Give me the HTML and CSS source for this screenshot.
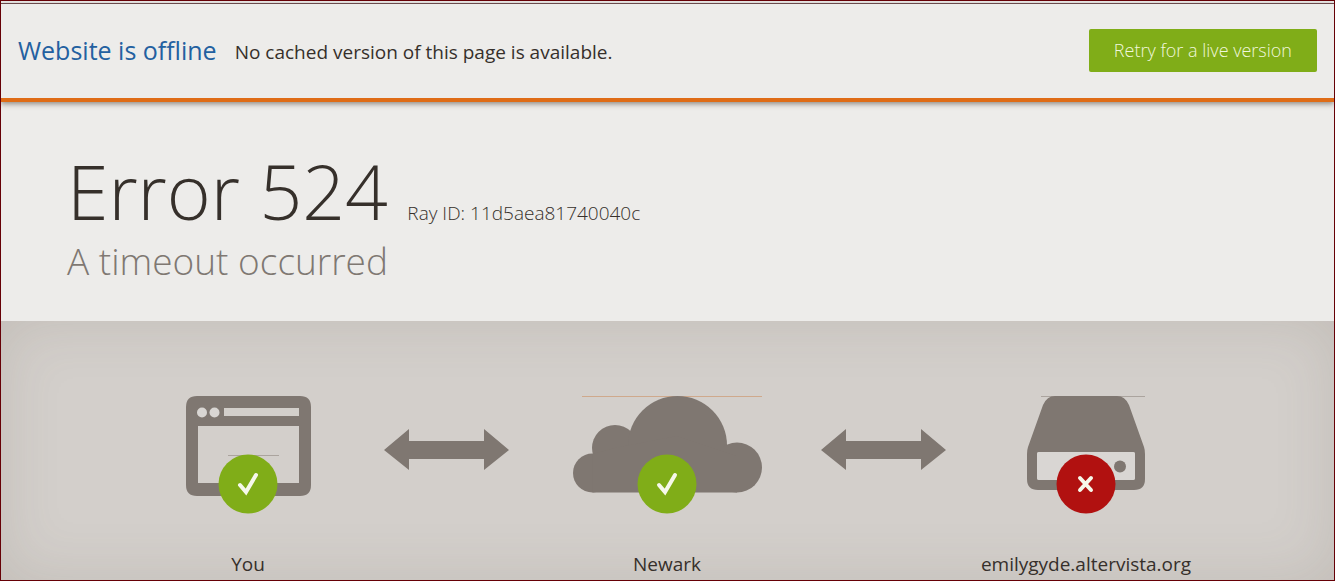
FILE: index.html
```html
<!DOCTYPE html>
<html lang="en">
<head>
    <meta charset="UTF-8">
    <meta name="viewport" content="width=device-width, initial-scale=1.0">
    <title>Error 524: A timeout occurred</title>
    <link rel="stylesheet" href="styles.css">
</head>
<body>
    <header class="offline-bar">
        <a class="offline-title" href="#">Website is offline</a>
        <p class="offline-text">No cached version of this page is available.</p>
        <button type="button" class="retry" onclick="location.reload()">Retry for a live version</button>
    </header>

    <section class="error">
        <h1>Error 524 <span class="ray">Ray ID: 11d5aea81740040c</span></h1>
        <h2>A timeout occurred</h2>
    </section>

    <main class="status">
        <div class="node">
            <div class="icon">
                <svg width="125" height="100" viewBox="0 0 125 100">
                    <path class="shape" fill-rule="evenodd" d="M11 0H114Q125 0 125 11V89Q125 100 114 100H11Q0 100 0 89V11Q0 0 11 0ZM38 12V20H113V12ZM12 30V87H113V30Z"/>
                    <circle class="hole" cx="16" cy="16.5" r="5"/>
                    <circle class="hole" cx="28.5" cy="16.5" r="5"/>
                    <path class="hairline" d="M42 59.5H93"/>
                </svg>
                <svg class="badge" width="60" height="60" viewBox="0 0 60 60">
                    <circle class="ok" cx="30" cy="30" r="29.5"/>
                    <path class="mark" d="M22 31L28 38L38 21"/>
                </svg>
            </div>
            <p>You</p>
        </div>

        <svg class="arrow" width="125" height="42" viewBox="0 0 125 42">
            <path class="shape" d="M0 21L25 0V12H100V0L125 21L100 41V30H25V41Z"/>
        </svg>

        <div class="node">
            <div class="icon">
                <svg width="189" height="100" viewBox="0 0 189 100">
                    <path class="tanline" d="M9 .5H189"/>
                    <g class="shape">
                        <circle cx="19.5" cy="77" r="19.5"/>
                        <circle cx="42" cy="52" r="23"/>
                        <circle cx="104.500" cy="49.500" r="49.500"/>
                        <circle cx="164" cy="71.500" r="25"/>
                        <path d="M19.500 58L42 52L104 40L164 60V96.500H19.500Z"/>
                    </g>
                </svg>
                <svg class="badge" width="60" height="60" viewBox="0 0 60 60">
                    <circle class="ok" cx="30" cy="30" r="29.5"/>
                    <path class="mark" d="M22 31L28 38L38 21"/>
                </svg>
            </div>
            <p>Newark</p>
        </div>

        <svg class="arrow" width="125" height="42" viewBox="0 0 125 42">
            <path class="shape" d="M0 21L25 0V12H100V0L125 21L100 41V30H25V41Z"/>
        </svg>

        <div class="node">
            <div class="icon">
                <svg width="118" height="100" viewBox="0 0 118 100">
                    <path class="hairline" d="M14 .5H118"/>
                    <path class="shape" fill-rule="evenodd" d="M28 0H90Q98 0 102 9L117 51Q118 54 118 58V83Q118 94 107 94H11Q0 94 0 83V58Q0 54 1 51L16 9Q20 0 28 0ZM12 56Q10 56 10 58V82Q10 84 12 84H106Q108 84 108 82V58Q108 56 106 56Z"/>
                    <rect class="panel" x="10" y="56" width="98" height="28" rx="2"/>
                    <circle class="shape" cx="93" cy="70.500" r="6"/>
                </svg>
                <svg class="badge" width="60" height="60" viewBox="0 0 60 60">
                    <circle class="fail" cx="30" cy="30" r="29.5"/>
                    <path class="mark" d="M24 24L35 36M35 24L24 36"/>
                </svg>
            </div>
            <p>emilygyde.altervista.org</p>
        </div>
    </main>
</body>
</html>
```
FILE: styles.css
```css
* {
    box-sizing: border-box;
}
body {
    display: flex;
    flex-direction: column;
    min-height: 100vh;
    margin: 0;
    padding-top: 2px;
    border: 1px solid #660006;
    background-color: #edecea;
    color: #36302b;
    font-family: "Open Sans", "Noto Sans", sans-serif;
}
h1, h2, p {
    margin: 0;
}
.offline-bar {
    display: flex;
    align-items: center;
    height: 99px;
    padding: 0 17px 2px;
    border-top: 1px solid #6b4a4c;
    border-bottom: 4px solid #df6c17;
    box-shadow: 0 2px 5px rgba(60, 45, 35, 0.5);
}
.offline-title {
    margin-right: 18px;
    color: #2360a0;
    font-size: 25px;
    text-decoration: none;
}
.offline-text {
    padding-top: 4px;
    font-size: 19px;
}
.retry {
    height: 43px;
    margin-left: auto;
    padding: 0 25px;
    background-color: #80ad18;
    border: none;
    border-radius: 2px;
    color: #f0f7dc;
    font-family: inherit;
    font-size: 18px;
    font-weight: 300;
    cursor: pointer;
}
.error {
    height: 219px;
    padding: 40px 66px 0;
}
h1 {
    font-size: 75px;
    font-weight: 300;
    line-height: 98px;
}
.ray {
    font-size: 19px;
    line-height: 26px;
}
h2 {
    color: #7f7872;
    font-size: 37px;
    font-weight: 300;
    line-height: 42px;
}
.status {
    display: grid;
    grid-template-columns: 214fr 182fr 260fr 172fr 234fr;
    flex: 1;
    justify-items: center;
    align-items: start;
    padding: 75px 131px 0 140px;
    background-color: #d3cfcb;
    box-shadow: inset 0 0 60px rgba(100, 85, 75, 0.15);
}
.node {
    text-align: center;
    font-size: 19px;
    line-height: 26px;
}
.icon {
    position: relative;
    height: 118px;
    margin-bottom: 37px;
}
.badge {
    position: absolute;
    left: calc(50% - 30px);
    bottom: 0;
}
.arrow {
    margin-top: 33px;
}
.shape {
    fill: #7f7771;
}
.hole, .panel {
    fill: #d9d6d3;
}
.hairline {
    stroke: #aba49e;
}
.tanline {
    stroke: #cfa98c;
}
.ok {
    fill: #80ad18;
}
.fail {
    fill: #b11110;
}
.mark {
    fill: none;
    stroke: #f6f8ea;
    stroke-width: 4;
    stroke-linecap: round;
}
```
